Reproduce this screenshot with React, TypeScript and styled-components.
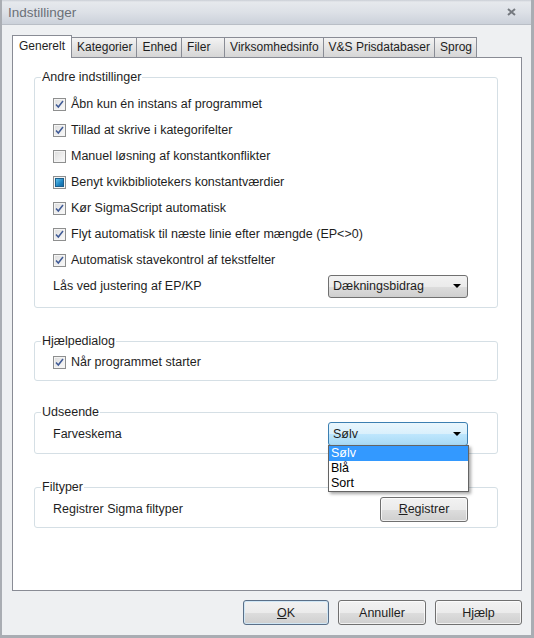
import React from 'react';
import styled, { createGlobalStyle } from 'styled-components';

const GlobalStyle = createGlobalStyle`
    html, body {
        margin: 0;
        padding: 0;
        background: #eef0f2;
    }
    body {
        font-family: "Liberation Sans", Arial, sans-serif;
        font-size: 12.5px;
        color: #1e1e1e;
    }
    * {
        box-sizing: border-box;
    }
`;

const Window = styled.div`
    width: 534px;
    height: 638px;
    display: flex;
    flex-direction: column;
    background: #eef0f2;
    border-left: 2px solid #a9adb3;
    border-right: 3px solid #a9adb3;
    border-bottom: 3px solid #a9adb3;
`;

const TitleBar = styled.div`
    height: 25px;
    flex: none;
    display: flex;
    align-items: center;
    justify-content: space-between;
    padding: 0 15px 0 6px;
    background: linear-gradient(#c9ced5 0px, #e6e9ed 2px, #dde1e7 12px, #cbd1da 100%);
    border-bottom: 1px solid #b9bec6;
    color: #6b7077;
    font-size: 13.5px;
`;

const Body = styled.div`
    flex: 1;
    display: flex;
    flex-direction: column;
    padding: 10px 9px 0 10px;
    min-height: 0;
`;

const TabStrip = styled.div`
    height: 22px;
    flex: none;
    display: flex;
    align-items: flex-end;
`;

const Tab = styled.div<{ $active?: boolean; $minWidth?: number }>`
    height: ${(p) => (p.$active ? 23 : 20)}px;
    min-width: ${(p) => p.$minWidth || 0}px;
    margin-bottom: ${(p) => (p.$active ? -1 : 0)}px;
    margin-left: -1px;
    padding: ${(p) => (p.$active ? '3px 6px 0 6px' : '2px 4px 0 5px')};
    border: 1px solid #898c95;
    border-bottom: none;
    background: ${(p) => (p.$active ? '#ffffff' : 'linear-gradient(#f3f3f3, #e4e4e4 50%, #d6d6d6)')};
    position: relative;
    z-index: ${(p) => (p.$active ? 2 : 1)};
    white-space: nowrap;
    font-size: 12px;
    line-height: 15px;
    &:first-child {
        margin-left: 0;
    }
`;

const Page = styled.div`
    flex: 1;
    display: flex;
    flex-direction: column;
    background: #ffffff;
    border: 1px solid #898c95;
    padding: 12px 23px 0 21px;
`;

const Group = styled.fieldset<{ $pt: number; $pb: number; $mt?: number }>`
    margin: ${(p) => p.$mt || 0}px 0 0 0;
    padding: ${(p) => p.$pt}px 29px ${(p) => p.$pb}px 18px;
    border: 1px solid #d5dfe5;
    border-radius: 3px;
    min-width: 0;
`;

const Legend = styled.legend`
    margin-left: -12px;
    padding: 0 1px;
    line-height: 15px;
    color: #1e1e1e;
`;

const Row = styled.div<{ $between?: boolean }>`
    height: 26px;
    display: flex;
    align-items: center;
    justify-content: ${(p) => (p.$between ? 'space-between' : 'flex-start')};
    gap: 5px;
`;

const Box = styled.span`
    width: 13px;
    height: 13px;
    flex: none;
    border: 1px solid #8e8f8f;
    background: linear-gradient(135deg, #dcdcdc, #fbfbfb);
    display: flex;
    align-items: center;
    justify-content: center;
    box-shadow: inset 0 0 0 1px #f4f4f4;
`;

const Mixed = styled.span`
    width: 9px;
    height: 9px;
    border: 1px solid #1d5f8c;
    background: linear-gradient(135deg, #62c3ec, #1e84c2 60%, #156aa3);
`;

const Label = styled.span`
    line-height: 15px;
    white-space: nowrap;
`;

const Select = styled.div<{ $open?: boolean }>`
    position: relative;
    width: 140px;
    height: ${(p) => (p.$open ? 24 : 23)}px;
    flex: none;
    display: flex;
    align-items: center;
    justify-content: space-between;
    padding: 0 6px 0 4px;
    border: 1px solid ${(p) => (p.$open ? '#3c7fb1' : '#707070')};
    border-radius: 3px;
    background: ${(p) =>
        p.$open
            ? 'linear-gradient(#eaf6fd 0%, #d9f0fc 50%, #bee6fd 51%, #a7d9f5 100%)'
            : 'linear-gradient(#f2f2f2 0%, #ebebeb 50%, #dddddd 51%, #cfcfcf 100%)'};
`;

const Arrow = styled.span`
    width: 0;
    height: 0;
    border-left: 4px solid transparent;
    border-right: 4px solid transparent;
    border-top: 4px solid #000000;
`;

const DropList = styled.div`
    position: absolute;
    top: 22px;
    left: -1px;
    width: 141px;
    border: 1px solid #646464;
    background: #ffffff;
    box-shadow: 2px 2px 3px rgba(0, 0, 0, 0.35);
    z-index: 5;
`;

const ListItem = styled.div<{ $selected?: boolean }>`
    height: 15px;
    line-height: 15px;
    padding-left: 2px;
    background: ${(p) => (p.$selected ? '#3399ff' : 'transparent')};
    color: ${(p) => (p.$selected ? '#ffffff' : '#000000')};
`;

const Button = styled.button<{ $width?: number; $default?: boolean }>`
    width: ${(p) => p.$width || 87}px;
    height: 25px;
    flex: none;
    padding: 0;
    border: 1px solid ${(p) => (p.$default ? '#5a6f88' : '#707070')};
    border-radius: 3px;
    background: linear-gradient(#f2f2f2 0%, #ebebeb 50%, #dddddd 51%, #cfcfcf 100%);
    box-shadow: inset 0 0 0 1px ${(p) => (p.$default ? '#cfe6f5' : 'rgba(255, 255, 255, 0.7)')};
    font-family: "Liberation Sans", Arial, sans-serif;
    font-size: 12.5px;
    color: #1e1e1e;
`;

const Footer = styled.div`
    height: 44px;
    flex: none;
    display: flex;
    justify-content: flex-end;
    align-items: flex-start;
    gap: 9px;
    padding: 9px 0 0 0;
`;

function CheckBox(props: { state: 'on' | 'off' | 'mixed' }) {
    return (
        <Box>
            {props.state === 'on' && (
                <svg width="9" height="9" viewBox="0 0 9 9">
                    <polyline points="1,4.5 3.3,7 8,1" fill="none" stroke="#3f5a96" strokeWidth="1.5" />
                </svg>
            )}
            {props.state === 'mixed' && <Mixed />}
        </Box>
    );
}

function CheckRow(props: { text: string; state: 'on' | 'off' | 'mixed' }) {
    return (
        <Row>
            <CheckBox state={props.state} />
            <Label>{props.text}</Label>
        </Row>
    );
}

const tabs = [
    { name: 'Generelt' },
    { name: 'Kategorier' },
    { name: 'Enhed' },
    { name: 'Filer', minWidth: 44 },
    { name: 'Virksomhedsinfo' },
    { name: 'V&S Prisdatabaser' },
    { name: 'Sprog' },
];

export default function App() {
    return (
        <>
            <GlobalStyle />
            <Window>
                <TitleBar>
                    <span>Indstillinger</span>
                    <svg width="9" height="8" viewBox="0 0 9 8">
                        <path d="M1 1 L8 7 M8 1 L1 7" stroke="#75797f" strokeWidth="2" />
                    </svg>
                </TitleBar>
                <Body>
                    <TabStrip>
                        {tabs.map((t, i) => (
                            <Tab key={t.name} $active={i === 0} $minWidth={t.minWidth}>
                                {t.name}
                            </Tab>
                        ))}
                    </TabStrip>
                    <Page>
                        <Group $pt={6} $pb={8}>
                            <Legend>Andre indstillinger</Legend>
                            <CheckRow state="on" text="Åbn kun én instans af programmet" />
                            <CheckRow state="on" text="Tillad at skrive i kategorifelter" />
                            <CheckRow state="off" text="Manuel løsning af konstantkonflikter" />
                            <CheckRow state="mixed" text="Benyt kvikbibliotekers konstantværdier" />
                            <CheckRow state="on" text="Kør SigmaScript automatisk" />
                            <CheckRow state="on" text="Flyt automatisk til næste linie efter mængde (EP<>0)" />
                            <CheckRow state="on" text="Automatisk stavekontrol af tekstfelter" />
                            <Row $between>
                                <Label>Lås ved justering af EP/KP</Label>
                                <Select>
                                    <span>Dækningsbidrag</span>
                                    <Arrow />
                                </Select>
                            </Row>
                        </Group>
                        <Group $pt={0} $pb={5} $mt={26}>
                            <Legend>Hjælpedialog</Legend>
                            <CheckRow state="on" text="Når programmet starter" />
                        </Group>
                        <Group $pt={1} $pb={6} $mt={24}>
                            <Legend>Udseende</Legend>
                            <Row $between>
                                <Label>Farveskema</Label>
                                <Select $open>
                                    <span>Sølv</span>
                                    <Arrow />
                                    <DropList>
                                        <ListItem $selected>Sølv</ListItem>
                                        <ListItem>Blå</ListItem>
                                        <ListItem>Sort</ListItem>
                                    </DropList>
                                </Select>
                            </Row>
                        </Group>
                        <Group $pt={1} $pb={5} $mt={26}>
                            <Legend>Filtyper</Legend>
                            <Row $between>
                                <Label>Registrer Sigma filtyper</Label>
                                <Button $width={88}>
                                    <u>R</u>egistrer
                                </Button>
                            </Row>
                        </Group>
                    </Page>
                    <Footer>
                        <Button $default $width={86}>
                            <u>O</u>K
                        </Button>
                        <Button $width={88}>Annuller</Button>
                        <Button $width={87}>Hjælp</Button>
                    </Footer>
                </Body>
            </Window>
        </>
    );
}
